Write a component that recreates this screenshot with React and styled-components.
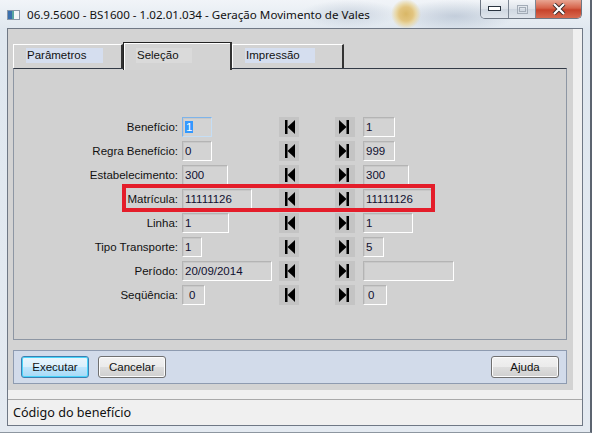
import React from "react";
import styled, { createGlobalStyle } from "styled-components";

const GlobalStyle = createGlobalStyle`
  html, body {
    margin: 0;
    padding: 0;
    background: #dfe6ee;
  }
  * {
    box-sizing: border-box;
  }
`;

const Window = styled.div`
  position: relative;
  width: 592px;
  height: 433px;
  overflow: hidden;
  display: flex;
  flex-direction: column;
  padding: 0 7px 6px 7px;
  font-family: "Liberation Sans", Arial, sans-serif;
  background:
    radial-gradient(circle at 406px 14px, #d9b766 0, #e2c47f 7px, #e8d7a6 10px, rgba(232, 224, 190, 0) 15px),
    radial-gradient(ellipse 50px 14px at 350px 14px, rgba(150, 166, 188, 0.35), rgba(150, 166, 188, 0)),
    radial-gradient(ellipse 60px 16px at 455px 16px, rgba(140, 158, 182, 0.4), rgba(140, 158, 182, 0)),
    linear-gradient(#f1f4f8, #dfe7ef 30px, #e4eaf1);
  border-right: 2px solid #5c6470;
  border-bottom: 1px solid #8d96a0;
`;

const TitleBar = styled.div`
  height: 28px;
  display: flex;
  align-items: center;
  gap: 7px;
  font-family: "Noto Sans", "Open Sans", sans-serif;
  font-size: 11.6px;
  color: #111;
`;

const AppIcon = styled.div`
  width: 13px;
  height: 10px;
  margin-top: 1px;
  border: 1px solid #8b98a8;
  background: linear-gradient(90deg, #3a6fae 0 4px, #5aa6a0 4px 6px, #f4f6f8 6px);
`;

const Caption = styled.span`
  flex: 1;
  white-space: nowrap;
`;

const Controls = styled.div`
  position: absolute;
  top: 0;
  right: 8px;
  display: flex;
  height: 19px;
  border: 1px solid #6e7784;
  border-top: none;
  border-radius: 0 0 5px 5px;
  overflow: hidden;
`;

const CtrlButton = styled.div`
  width: ${(p) => p.w}px;
  display: flex;
  align-items: center;
  justify-content: center;
  background: ${(p) =>
    p.close
      ? "linear-gradient(#e8a592, #d6634a 45%, #c7432b 55%, #d86a4f)"
      : "linear-gradient(#f4f6f9, #dde3ea 50%, #cfd7e1 51%, #dfe5ec)"};
  border-left: ${(p) => (p.first ? "none" : "1px solid #7d8794")};
`;

const Client = styled.div`
  flex: 1;
  display: flex;
  flex-direction: column;
  border: 1px solid #6f7885;
  background: #f0f0f0;
`;

const Body = styled.div`
  width: 565px;
  height: 361px;
  background: #d3d3d3;
  padding: 13px 6px 0 5px;
  display: flex;
  flex-direction: column;
`;

const TabStrip = styled.div`
  display: flex;
  align-items: flex-end;
  height: 26px;
  position: relative;
  z-index: 1;
`;

const Tab = styled.div`
  width: ${(p) => p.w}px;
  height: ${(p) => (p.active ? 28 : 24)}px;
  margin-bottom: ${(p) => (p.active ? -2 : 0)}px;
  padding: ${(p) => (p.active ? "5px 0 0 12px" : "3px 0 0 12px")};
  background: #d3d3d3;
  border-top: 1px solid ${(p) => (p.active ? "#222" : "#fff")};
  border-left: 1px solid ${(p) => (p.active ? "#222" : "#fff")};
  border-right: 2px solid #333;
  box-shadow: ${(p) => (p.active ? "inset 1px 1px 0 #fff" : "none")};
  font-size: 11.5px;
  color: #111;
`;

const TabLabel = styled.span`
  display: inline-block;
  width: ${(p) => p.w}px;
  height: 15px;
  line-height: 15px;
  padding-left: 1px;
  background: ${(p) => (p.active ? "#dadada" : "#d5deef")};
`;

const TabPanel = styled.div`
  height: 272px;
  border: 1px solid #8d96a3;
  border-top: 1px solid #333a46;
  background: #d1d1d1;
  padding-top: 48px;
  display: flex;
  flex-direction: column;
  gap: 4px;
`;

const Row = styled.div`
  display: grid;
  grid-template-columns: 168px 97px 56px 28px 1fr;
  align-items: center;
  height: 20px;
  font-size: 11.5px;
  color: #111;
`;

const Label = styled.span`
  text-align: right;
  padding-right: 4px;
  white-space: nowrap;
`;

const Field = styled.div`
  width: ${(p) => p.w}px;
  height: 20px;
  line-height: 18px;
  padding-left: ${(p) => p.indent || 2}px;
  border: 1px solid;
  border-color: ${(p) =>
    p.focus ? "#7eb4ea #c5def5 #c5def5 #7eb4ea" : "#b4b4b4 #fff #fff #b4b4b4"};
  box-shadow: inset 1px 1px 0 #c8c8c8;
  background: #d3d3d3;
  color: #101030;
  white-space: nowrap;
  overflow: hidden;
`;

const Selected = styled.span`
  background: #3399ff;
  color: #fff;
  padding: 0 1px;
`;

const NavButton = styled.div`
  width: 20px;
  height: 20px;
  background: #c4c4c4;
  display: flex;
  align-items: center;
  justify-content: center;
`;

const ButtonBar = styled.div`
  margin-top: 10px;
  height: 34px;
  border: 1px solid #8e9bb0;
  background: #d2dbea;
  display: flex;
  align-items: center;
  gap: 9px;
  padding: 0 7px;
`;

const Button = styled.button`
  width: 68px;
  height: 22px;
  padding: 0;
  border-radius: 3px;
  border: 1px solid ${(p) => (p.primary ? "#3c7fb1" : "#707070")};
  background: ${(p) =>
    p.primary
      ? "linear-gradient(#eaf6fd, #d9f0fc 50%, #bee6fd 51%, #a7d9f5)"
      : "linear-gradient(#f2f2f2, #ebebeb 50%, #dddddd 51%, #cfcfcf)"};
  box-shadow: inset 0 0 0 1px ${(p) => (p.primary ? "#48d4fa" : "#fcfcfc")};
  font-family: "Liberation Sans", Arial, sans-serif;
  font-size: 11.5px;
  color: #111;
  margin-left: ${(p) => (p.push ? "auto" : "0")};
`;

const StatusBar = styled.div`
  margin-top: 9px;
  flex: 1;
  border-top: 1px solid #a9a9a9;
  display: flex;
  align-items: center;
  padding-left: 5px;
  font-family: "Noto Sans", "Open Sans", sans-serif;
  font-size: 12.6px;
  color: #111;
`;

const Highlight = styled.div`
  position: absolute;
  left: 122px;
  top: 184px;
  width: 313px;
  height: 28px;
  border: 4px solid #e41d2a;
  pointer-events: none;
`;

function FirstIcon() {
  return (
    <svg width="20" height="20" viewBox="0 0 20 20">
      <rect x="6" y="3" width="2.5" height="14" fill="#000" />
      <polygon points="16,3 8.5,10 16,17" fill="#000" />
    </svg>
  );
}

function LastIcon() {
  return (
    <svg width="20" height="20" viewBox="0 0 20 20">
      <polygon points="4,3 11.5,10 4,17" fill="#000" />
      <rect x="11.5" y="3" width="2.5" height="14" fill="#000" />
    </svg>
  );
}

const rows = [
  { label: "Benefício:", from: "1", fw: 30, to: "1", tw: 32, focus: true },
  { label: "Regra Benefício:", from: "0", fw: 30, to: "999", tw: 32 },
  { label: "Estabelecimento:", from: "300", fw: 46, to: "300", tw: 46 },
  { label: "Matrícula:", from: "11111126", fw: 70, to: "11111126", tw: 70 },
  { label: "Linha:", from: "1", fw: 47, to: "1", tw: 50 },
  { label: "Tipo Transporte:", from: "1", fw: 20, to: "5", tw: 21 },
  { label: "Período:", from: "20/09/2014", fw: 90, to: "", tw: 91 },
  { label: "Seqüência:", from: "0", fw: 23, to: "0", tw: 24, indent: [6, 4] },
];

export default function App() {
  return (
    <>
      <GlobalStyle />
      <Window>
        <TitleBar>
          <AppIcon />
          <Caption>06.9.5600 - BS1600 - 1.02.01.034 - Geração Movimento de Vales</Caption>
        </TitleBar>
        <Controls>
          <CtrlButton w={27} first>
            <svg width="13" height="6" viewBox="0 0 13 6">
              <rect x="0.5" y="0.5" width="12" height="4" fill="#fff" stroke="#2a3440" />
            </svg>
          </CtrlButton>
          <CtrlButton w={27}>
            <svg width="11" height="9" viewBox="0 0 11 9">
              <rect x="0.5" y="0.5" width="10" height="8" fill="none" stroke="#a3acb7" />
              <rect x="2.5" y="2.5" width="6" height="4" fill="none" stroke="#a3acb7" />
            </svg>
          </CtrlButton>
          <CtrlButton w={46} close>
            <svg width="14" height="12" viewBox="0 0 14 12">
              <path d="M2 1 L12 11 M12 1 L2 11" stroke="#3a2a28" strokeWidth="4" />
              <path d="M2 1 L12 11 M12 1 L2 11" stroke="#fff" strokeWidth="2.2" />
            </svg>
          </CtrlButton>
        </Controls>
        <Client>
          <Body>
            <TabStrip>
              <Tab w={110}>
                <TabLabel w={77}>Parâmetros</TabLabel>
              </Tab>
              <Tab w={109} active>
                <TabLabel w={56} active>
                  Seleção
                </TabLabel>
              </Tab>
              <Tab w={112}>
                <TabLabel w={70}>Impressão</TabLabel>
              </Tab>
            </TabStrip>
            <TabPanel>
              {rows.map((r) => (
                <Row key={r.label}>
                  <Label>{r.label}</Label>
                  <Field w={r.fw} focus={r.focus} indent={r.indent && r.indent[0]}>
                    {r.focus ? <Selected>{r.from}</Selected> : r.from}
                  </Field>
                  <NavButton>
                    <FirstIcon />
                  </NavButton>
                  <NavButton>
                    <LastIcon />
                  </NavButton>
                  <Field w={r.tw} indent={r.indent && r.indent[1]}>
                    {r.to}
                  </Field>
                </Row>
              ))}
            </TabPanel>
            <ButtonBar>
              <Button primary>Executar</Button>
              <Button>Cancelar</Button>
              <Button push>Ajuda</Button>
            </ButtonBar>
          </Body>
          <StatusBar>Código do benefício</StatusBar>
        </Client>
        <Highlight />
      </Window>
    </>
  );
}
